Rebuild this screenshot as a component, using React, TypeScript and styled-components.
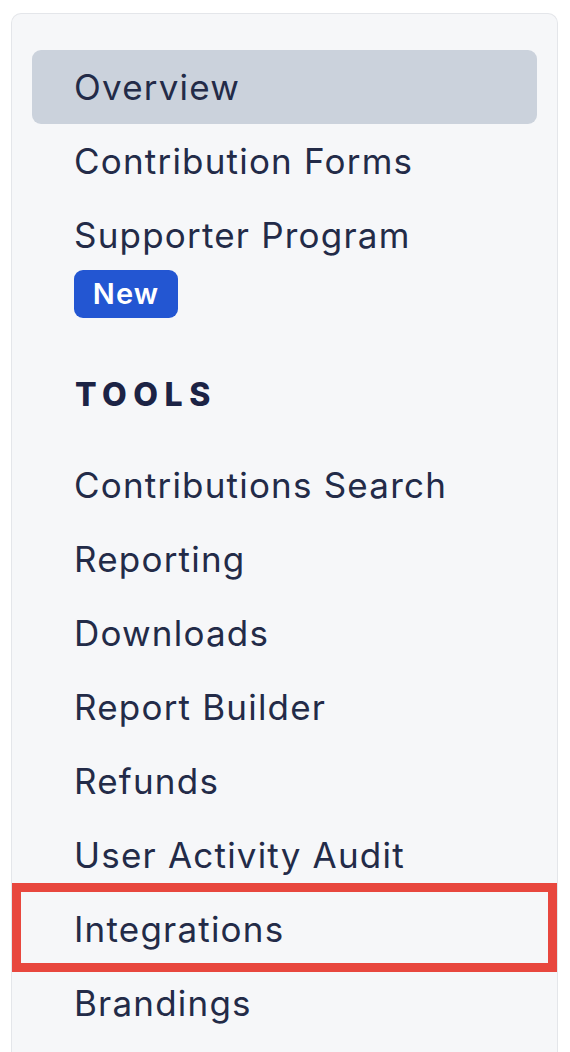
import React from "react";
import styled, { createGlobalStyle } from "styled-components";

const Global = createGlobalStyle`
  html, body { margin: 0; padding: 0; background: #ffffff; }
  body { font-family: Inter, "Noto Sans", "Liberation Sans", sans-serif; -webkit-font-smoothing: antialiased; }
`;

const Page = styled.div`
  padding: 13px 12px 0 11px;
  height: 1052px;
  box-sizing: border-box;
  overflow: hidden;
`;

const Card = styled.nav`
  background: #f6f7f9;
  border: 1.5px solid #e4e6ea;
  border-bottom: none;
  border-radius: 10px 10px 0 0;
  padding: 36px 20px 40px 20px;
  min-height: 1100px;
  box-sizing: border-box;
`;

const List = styled.ul`
  list-style: none;
  margin: 0;
  padding: 0;
  display: flex;
  flex-direction: column;
`;

const Item = styled.li<{ $active?: boolean; $marked?: boolean }>`
  position: relative;
  padding: 13px 42px;
  font-size: 35px;
  line-height: 48px;
  color: #232b48;
  border-radius: 9px;
  background: ${(p) => (p.$active ? "#cbd2dc" : "transparent")};
  letter-spacing: 1.2px;
  white-space: nowrap;

  ${(p) =>
    p.$marked &&
    `
    &::after {
      content: "";
      position: absolute;
      top: -9px;
      bottom: -6px;
      left: -20px;
      right: -20px;
      border: 9.5px solid #e8473e;
      pointer-events: none;
    }
  `}
`;

const Badge = styled.span`
  display: inline-flex;
  align-items: center;
  justify-content: center;
  margin-top: 11px;
  width: 104px;
  height: 48px;
  box-sizing: border-box;
  border-radius: 9px;
  background: #2356d2;
  color: #ffffff;
  font-size: 29px;
  font-weight: 600;
  letter-spacing: 1.2px;
`;

const ItemBody = styled.div`
  display: flex;
  flex-direction: column;
  align-items: flex-start;
`;

const Heading = styled.h3`
  margin: 0;
  padding: 40px 43px 29px;
  font-size: 32px;
  line-height: 48px;
  font-weight: 800;
  letter-spacing: 6.5px;
  color: #1c2345;
`;

const tools = [
  "Contributions Search",
  "Reporting",
  "Downloads",
  "Report Builder",
  "Refunds",
  "User Activity Audit",
  "Integrations",
  "Brandings",
];

export default function App() {
  return (
    <>
      <Global />
      <Page>
        <Card>
          <List>
            <Item $active>Overview</Item>
            <Item>Contribution Forms</Item>
            <Item>
              <ItemBody>
                Supporter Program
                <Badge>New</Badge>
              </ItemBody>
            </Item>
          </List>
          <Heading>TOOLS</Heading>
          <List>
            {tools.map((t) => (
              <Item key={t} $marked={t === "Integrations"}>
                {t}
              </Item>
            ))}
          </List>
        </Card>
      </Page>
    </>
  );
}
